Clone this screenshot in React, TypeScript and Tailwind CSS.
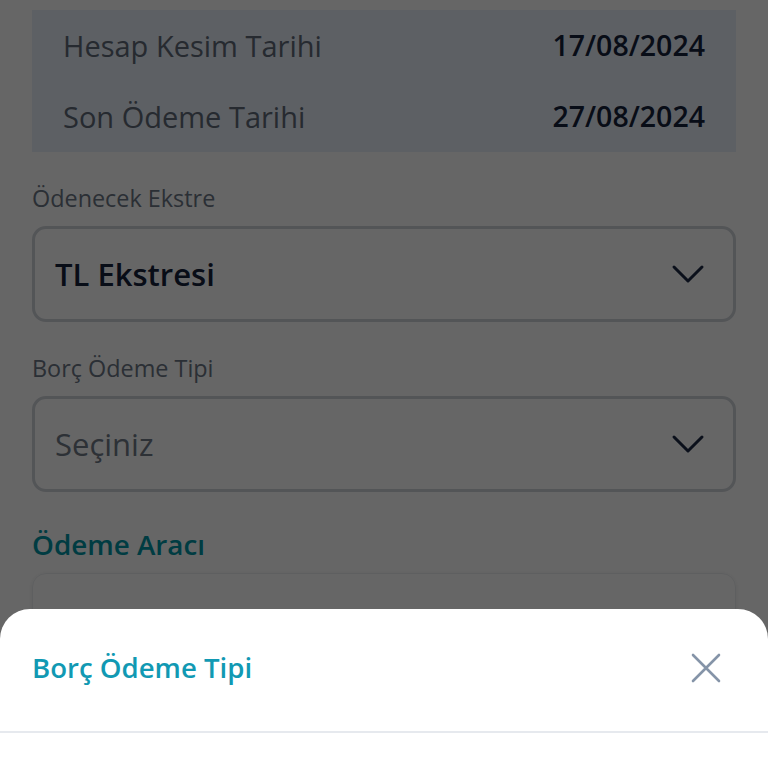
function InfoRow({ label, value }: { label: string; value: string }) {
  return (
    <div className="flex items-center justify-between h-[71px]">
      <span className="text-[29px] text-[#5f6a78]">{label}</span>
      <span className="text-[28.5px] font-semibold text-[#15223a]">{value}</span>
    </div>
  );
}

function Chevron() {
  return (
    <svg width="34" height="20" viewBox="0 0 34 20" fill="none">
      <path d="M3 3L17 17L31 3" stroke="#1d2a44" strokeWidth="3" strokeLinecap="round" strokeLinejoin="round" />
    </svg>
  );
}

function SelectBox({ label, value, placeholder }: { label: string; value: string; placeholder?: boolean }) {
  return (
    <div className="flex flex-col">
      <span className="text-[23.4px] text-[#6b7685] leading-none h-[54px] flex items-center">{label}</span>
      <div className="h-[96px] border-[3px] border-[#d0d4da] rounded-[14px] flex items-center justify-between pl-[20px] pr-[28px]">
        <span
          className={
            placeholder
              ? "text-[31px] text-[#707a88]"
              : "text-[31px] font-semibold text-[#15223a]"
          }
        >
          {value}
        </span>
        <Chevron />
      </div>
    </div>
  );
}

export default function App() {
  return (
    <div
      className="relative w-[768px] h-[768px] overflow-hidden bg-white"
      style={{ fontFamily: '"Open Sans", "Noto Sans", sans-serif' }}
    >
      <div className="px-[32px] pt-[10px] flex flex-col">
        <div className="bg-[#e8f0fa] px-[31px]">
          <InfoRow label="Hesap Kesim Tarihi" value="17/08/2024" />
          <InfoRow label="Son Ödeme Tarihi" value="27/08/2024" />
        </div>
        <div className="mt-[20px]">
          <SelectBox label="Ödenecek Ekstre" value="TL Ekstresi" />
        </div>
        <div className="mt-[20px]">
          <SelectBox label="Borç Ödeme Tipi" value="Seçiniz" placeholder />
        </div>
        <div className="mt-[33px] text-[27.8px] leading-[38px] font-semibold text-[#0096a6]">Ödeme Aracı</div>
        <div className="mt-[10px] h-[160px] rounded-[14px] border border-[#eceef1] shadow-[0_1px_4px_rgba(0,0,0,0.08)]"></div>
      </div>

      <div className="absolute inset-0 bg-black/60"></div>

      <div className="absolute left-0 right-0 top-[609px] bottom-0 bg-white rounded-t-[30px] flex flex-col">
        <div className="h-[122px] flex items-center justify-between pl-[32px] pr-[46px] pb-[4px]">
          <span className="text-[27.6px] font-semibold text-[#1199b3]">Borç Ödeme Tipi</span>
          <svg width="32" height="32" viewBox="0 0 32 32" fill="none">
            <path d="M3 3L29 29M29 3L3 29" stroke="#8594a8" strokeWidth="2.6" strokeLinecap="round" />
          </svg>
        </div>
        <div className="h-[2px] bg-[#e6e9ee]"></div>
      </div>
    </div>
  );
}
